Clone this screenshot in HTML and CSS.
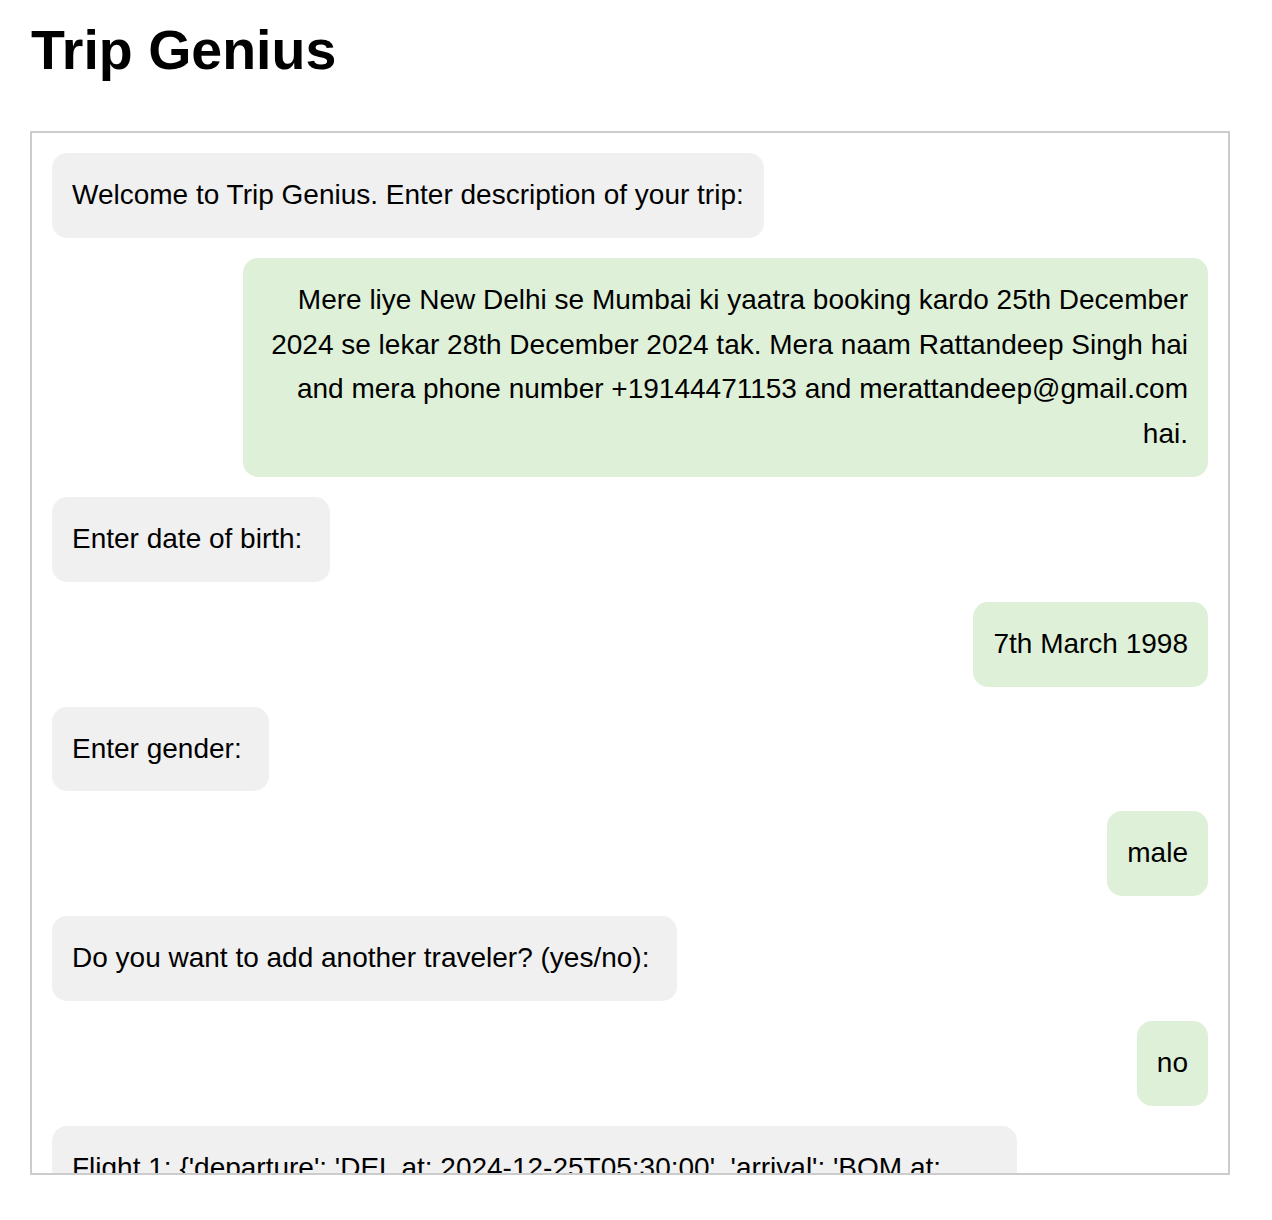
FILE: index.html
```html
<!DOCTYPE html>
<html lang="en">
<head>
<meta charset="utf-8">
<title>Trip Genius</title>
<link rel="stylesheet" href="styles.css">
</head>
<body>
<h1 class="title">Trip Genius</h1>
<div class="chat">
  <div class="msg bot">Welcome to Trip Genius. Enter description of your trip:</div>
  <div class="msg user">Mere liye New Delhi se Mumbai ki yaatra booking kardo 25th December 2024 se lekar 28th December 2024 tak. Mera naam Rattandeep Singh hai and mera phone number +19144471153 and merattandeep@gmail.com hai.</div>
  <div class="msg bot">Enter date of birth:&nbsp;</div>
  <div class="msg user">7th March 1998</div>
  <div class="msg bot">Enter gender:&nbsp;</div>
  <div class="msg user">male</div>
  <div class="msg bot">Do you want to add another traveler? (yes/no):&nbsp;</div>
  <div class="msg user">no</div>
  <div class="msg bot">Flight 1: {'departure': 'DEL at: 2024-12-25T05:30:00', 'arrival': 'BOM at: 2024-12-25T07:45:00', 'duration': 'PT2H15M', 'carrier': 'AI', 'price': '5432.00 INR'}</div>
</div>
</body>
</html>
```

FILE: styles.css
```css
html, body {
  margin: 0;
  padding: 0;
  background: #ffffff;
}

body {
  padding: 0 42px 0 30px;
  font-family: "Liberation Sans", Arial, sans-serif;
  color: #000;
}

.title {
  margin: 18px 0 49px;
  font-size: 55.5px;
  line-height: 64px;
  font-weight: bold;
  padding-left: 1px;
}

.chat {
  box-sizing: border-box;
  width: 1200px;
  height: 1044px;
  border: 2px solid #cccccc;
  padding: 20px 20px 0;
  display: flex;
  flex-direction: column;
  overflow: hidden;
}

.msg {
  flex: none;
  max-width: 80%;
  padding: 20px;
  margin-bottom: 20px;
  border-radius: 15px;
  font-size: 28px;
  line-height: 1.6;
}

.bot {
  align-self: flex-start;
  background: #f0f0f0;
  text-align: left;
}

.user {
  align-self: flex-end;
  background: #dff0d8;
  text-align: right;
}
```
